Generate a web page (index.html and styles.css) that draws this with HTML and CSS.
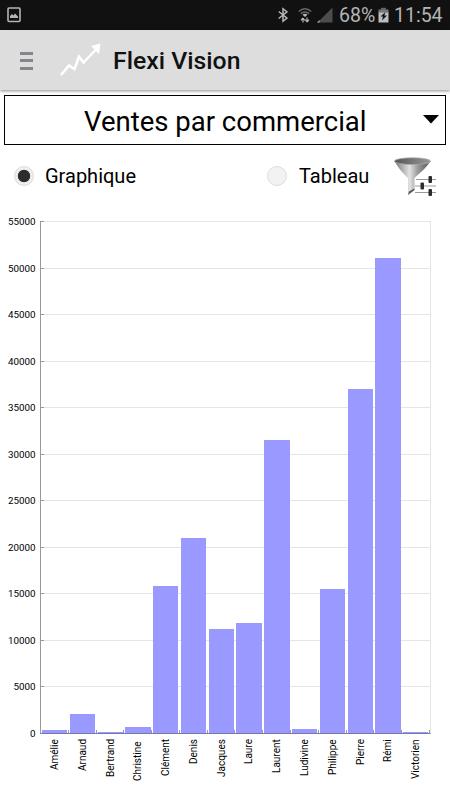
FILE: index.html
```html
<!DOCTYPE html>
<html lang="fr">
<head>
  <meta charset="UTF-8" />
  <meta name="viewport" content="width=device-width, initial-scale=1.0"/>
  <title>Flexi Vision</title>
  <link rel="stylesheet" href="styles.css">
</head>
<body>
  <div class="statusbar">
    <svg class="ico-image" width="14" height="16" viewBox="0 0 14 16">
      <rect x="1" y="1" width="12" height="13.5" rx="1" fill="none" stroke="#b5b5b5" stroke-width="1.6"/>
      <path d="M3 11V9l2-2 1.5 1.5L8 6.500l3 3V11z" fill="#b5b5b5"/>
    </svg>
    <div class="status-right">
      <svg class="ico-bt" width="10" height="16" viewBox="0 0 10 16">
        <path d="M.7 4.500L9 11.200 5 14.300V1.700L9 4.800.7 11.500" fill="none" stroke="#b5b5b5" stroke-width="1.500"/>
      </svg>
      <svg class="ico-wifi" width="14" height="16" viewBox="0 0 14 16">
        <path d="M.7 4.500Q7-1 13.300 4.500M2.800 6.700Q7 3.200 11.200 6.700" fill="none" stroke="#666" stroke-width="1.500"/>
        <path d="M4.500 7.800Q7 5.800 9.500 7.800L7 10z" fill="#b5b5b5"/>
        <path d="M5 15.500V11.500M3 13.300l2-2.300M9 10.500V14.500M11 12.700l-2 2.300M7.300 12.700L9 15M5 11l1.700 2.300" fill="none" stroke="#b5b5b5" stroke-width="1.200"/>
      </svg>
      <svg class="ico-signal" width="16" height="16" viewBox="0 0 16 16">
        <path d="M15.500.5V15.500H.5z" fill="#4d4d4d"/>
        <path d="M2.500 13v2.500H0z" fill="#b5b5b5"/>
      </svg>
      <span class="percent">68%</span>
      <svg class="ico-battery" width="11" height="16" viewBox="0 0 11 16">
        <path d="M3 .8h5v2H3z" fill="#666"/>
        <path d="M.5 2.500h10v3.500H.5z" fill="#777"/>
        <path d="M.5 5.500h10v10H.5z" fill="#bdbdbd"/>
        <path d="M7.500 5L2.500 9.500H5L4 13.500l5-5H6.300z" fill="#111"/>
      </svg>
      <span class="clock">11:54</span>
    </div>
  </div>

  <header class="header">
    <div class="burger"><i></i><i></i><i></i></div>
    <svg class="logo" width="42" height="34" viewBox="0 0 42 34">
      <path d="M1 32L9 22.500 14.500 26 19 13.500 23.500 19.500 37 5.500" fill="none" stroke="#fff" stroke-width="2.500"/>
      <path d="M31 3L40.500.5 39 11z" fill="#fff"/>
    </svg>
    <h1>Flexi Vision</h1>
  </header>

  <div class="select">
    <span>Ventes par commercial</span>
    <svg class="arrow" width="16" height="9" viewBox="0 0 16 9"><path d="M0 0h16L8 8.500z"/></svg>
  </div>

  <div class="options">
    <div class="radio checked"></div>
    <span class="graphique">Graphique</span>
    <div class="radio"></div>
    <span class="tableau">Tableau</span>
    <svg class="filter" width="44" height="40" viewBox="0 0 44 40">
      <defs>
        <linearGradient id="cone">
          <stop offset="0" stop-color="#777"/>
          <stop offset=".42" stop-color="#e2e2e2"/>
          <stop offset=".65" stop-color="#999"/>
          <stop offset="1" stop-color="#555"/>
        </linearGradient>
        <linearGradient id="rim">
          <stop offset="0" stop-color="#555"/>
          <stop offset="1" stop-color="#999"/>
        </linearGradient>
      </defs>
      <path d="M1.500 4C5 11 11 17 15 21V38L21.500 33V21C27 16 34 10 37.500 4z" fill="url(#cone)"/>
      <ellipse cx="19.500" cy="4.200" rx="18" ry="3.400" fill="url(#rim)" stroke="#aaa" stroke-width=".8"/>
      <path d="M15 38l1-3.500 5.500-3V33z" fill="#555"/>
      <path d="M23 22.500H43M22 29H43M22 35.500H43" stroke="#999" stroke-width="1.200"/>
      <rect x="35.500" y="19" width="3.500" height="7" rx="1" fill="#2b2b2b"/>
      <rect x="27.500" y="25.500" width="3.500" height="7" rx="1" fill="#2b2b2b"/>
      <rect x="35.500" y="32" width="3.500" height="7" rx="1" fill="#2b2b2b"/>
    </svg>
  </div>

  <div class="chart">
    <div class="y-axis">
      <span>55000</span><span>50000</span><span>45000</span><span>40000</span>
      <span>35000</span><span>30000</span><span>25000</span><span>20000</span>
      <span>15000</span><span>10000</span><span>5000</span><span>0</span>
    </div>
    <div class="plot">
      <div class="col"><div class="bar" style="height:0.6%"></div></div>
      <div class="col"><div class="bar" style="height:3.75%"></div></div>
      <div class="col"><div class="bar" style="height:0.1%"></div></div>
      <div class="col"><div class="bar" style="height:1.1%"></div></div>
      <div class="col"><div class="bar" style="height:28.7%"></div></div>
      <div class="col"><div class="bar" style="height:38.1%"></div></div>
      <div class="col"><div class="bar" style="height:20.35%"></div></div>
      <div class="col"><div class="bar" style="height:21.5%"></div></div>
      <div class="col"><div class="bar" style="height:57.25%"></div></div>
      <div class="col"><div class="bar" style="height:0.7%"></div></div>
      <div class="col"><div class="bar" style="height:28.1%"></div></div>
      <div class="col"><div class="bar" style="height:67.1%"></div></div>
      <div class="col"><div class="bar" style="height:92.7%"></div></div>
      <div class="col"><div class="bar" style="height:0.15%"></div></div>
    </div>
    <div class="x-axis">
      <span>Amélie</span><span>Arnaud</span><span>Bertrand</span><span class="lower">Christine</span>
      <span>Clément</span><span>Denis</span><span>Jacques</span><span>Laure</span>
      <span>Laurent</span><span>Ludivine</span><span>Philippe</span><span>Pierre</span>
      <span>Rémi</span><span>Victorien</span>
    </div>
  </div>
</body>
</html>
```
FILE: styles.css
```css
* {
  box-sizing: border-box;
}
body {
  margin: 0;
  height: 800px;
  overflow: hidden;
  background: #fff;
  color: #000;
  font-family: Roboto, "Liberation Sans", sans-serif;
}
svg {
  display: block;
  flex: none;
}

/* barre de statut */
.statusbar {
  display: flex;
  justify-content: space-between;
  align-items: center;
  height: 30px;
  padding: 0 8px 0 7px;
  background: #111;
  color: #b5b5b5;
  font-size: 19.500px;
  line-height: 30px;
}
.status-right {
  display: flex;
  align-items: center;
}
.ico-wifi {
  margin-left: 10px;
}
.ico-signal {
  margin-left: 5px;
}
.percent {
  width: 35px;
  margin-left: 6px;
  padding-top: 2px;
  white-space: nowrap;
}
.ico-battery {
  margin-left: 4px;
}
.clock {
  width: 48px;
  margin-left: 5px;
  padding-top: 2px;
  white-space: nowrap;
}

/* en-tete */
.header {
  display: flex;
  align-items: center;
  height: 60px;
  padding-left: 20px;
  background: #ddd;
  box-shadow: 0 1px 3px rgba(0, 0, 0, 0.45);
}
.burger {
  display: flex;
  flex-direction: column;
  gap: 4.500px;
  width: 13px;
  margin-top: 1px;
}
.burger i {
  height: 3px;
  background: #85858a;
}
.logo {
  margin-left: 27px;
}
h1 {
  margin: 1px 0 0 11px;
  font-size: 24.800px;
  font-weight: 500;
  color: #111;
  white-space: nowrap;
}

.select {
  display: flex;
  align-items: center;
  height: 50px;
  margin: 5px 4px 0;
  padding: 2px 6px 0 79px;
  border: 1px solid #000;
  font-size: 27.500px;
  white-space: nowrap;
}
.arrow {
  margin: -4px 0 0 auto;
}

/* choix de l'affichage */
.options {
  display: flex;
  align-items: center;
  height: 62px;
  padding: 0 13px 0 14px;
  font-size: 20px;
}
.radio {
  flex: none;
  width: 20px;
  height: 20px;
  border: 1.500px solid #ddd;
  border-radius: 50%;
  background: #f2f2f2;
}
.checked {
  background: radial-gradient(circle, #2d2d2d 5.800px, #eee 6.600px);
}
.graphique {
  flex: none;
  width: 233px;
  padding-left: 11px;
}
.radio + .tableau {
  padding-left: 12px;
}
.filter {
  margin: 2px 0 0 auto;
}

/* graphique */
.chart {
  display: grid;
  grid-template-columns: 36px 391px;
  grid-template-rows: 513px auto;
  column-gap: 4px;
  margin-top: 14px;
  font-size: 9.800px;
}
.y-axis {
  display: flex;
  flex-direction: column;
  justify-content: space-between;
  margin: -6px 0 -6px;
  padding-right: .5px;
  line-height: 13px;
  text-align: right;
}
.plot {
  display: flex;
  border-left: 1px solid #999;
  border-right: 1px solid #e5e5e5;
  border-bottom: 1px solid #77a;
  background:
    repeating-linear-gradient(#999 0 1px, transparent 1px 46.545px) 0 0 / 3px 100% no-repeat,
    repeating-linear-gradient(#e5e5e5 0 1px, transparent 1px 46.545px);
}
.col {
  display: flex;
  flex: 1;
  align-items: flex-end;
  padding: 0 1.500px 0 1px;
  background: linear-gradient(#999, #999) right bottom / 1px 3px no-repeat;
}
.bar {
  width: 100%;
  min-height: 1px;
  background: #99f;
}
.x-axis {
  display: flex;
  grid-column: 2;
  padding: 5px 1px 0;
  font-size: 10px;
}
.x-axis span {
  flex: 1;
  min-width: 0;
  height: 46px;
  line-height: 27px;
  writing-mode: vertical-rl;
  transform: rotate(180deg);
  text-align: right;
}
.x-axis .lower {
  margin-top: 2px;
}
```
